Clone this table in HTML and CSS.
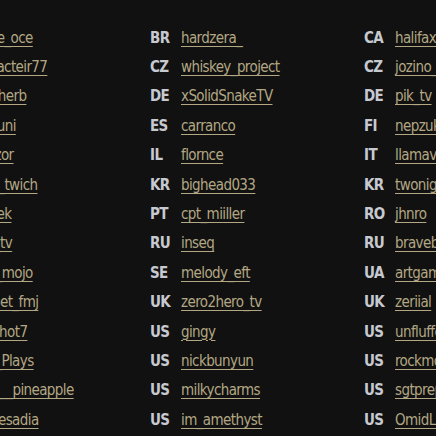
FILE: index.html
```html
<!DOCTYPE html>
<html>
<head>
<meta charset="utf-8">
<link rel="stylesheet" href="styles.css">
</head>
<body>
<div class="board">
  <ul class="col">
    <li class="row"><span class="cc">AU</span><a class="name" href="#">Hattie_oce</a></li>
    <li class="row"><span class="cc">BE</span><a class="name" href="#">Characteir77</a></li>
    <li class="row"><span class="cc">CA</span><a class="name" href="#">lazy_herb</a></li>
    <li class="row"><span class="cc">CA</span><a class="name" href="#">shyguni</a></li>
    <li class="row"><span class="cc">DE</span><a class="name" href="#">Bluezor</a></li>
    <li class="row"><span class="cc">DE</span><a class="name" href="#">Ianro_twich</a></li>
    <li class="row"><span class="cc">FR</span><a class="name" href="#">Koshek</a></li>
    <li class="row"><span class="cc">NL</span><a class="name" href="#">Tazo_tv</a></li>
    <li class="row"><span class="cc">PL</span><a class="name" href="#">Mike_mojo</a></li>
    <li class="row"><span class="cc">UK</span><a class="name" href="#">Helmet_fmj</a></li>
    <li class="row"><span class="cc">US</span><a class="name" href="#">Oneshot7</a></li>
    <li class="row"><span class="cc">US</span><a class="name" href="#">Nina_Plays</a></li>
    <li class="row"><span class="cc">US</span><a class="name" href="#">sour___pineapple</a></li>
    <li class="row"><span class="cc">US</span><a class="name" href="#">Quiikesadia</a></li>
  </ul>
  <ul class="col">
    <li class="row"><span class="cc">BR</span><a class="name" href="#">hardzera_</a></li>
    <li class="row"><span class="cc">CZ</span><a class="name" href="#">whiskey_project</a></li>
    <li class="row"><span class="cc">DE</span><a class="name" href="#">xSolidSnakeTV</a></li>
    <li class="row"><span class="cc">ES</span><a class="name" href="#">carranco</a></li>
    <li class="row"><span class="cc">IL</span><a class="name" href="#">florncе</a></li>
    <li class="row"><span class="cc">KR</span><a class="name" href="#">bighead033</a></li>
    <li class="row"><span class="cc">PT</span><a class="name" href="#">cpt_miiller</a></li>
    <li class="row"><span class="cc">RU</span><a class="name" href="#">inseq</a></li>
    <li class="row"><span class="cc">SE</span><a class="name" href="#">melody_eft</a></li>
    <li class="row"><span class="cc">UK</span><a class="name" href="#">zero2hero_tv</a></li>
    <li class="row"><span class="cc">US</span><a class="name" href="#">gingy</a></li>
    <li class="row"><span class="cc">US</span><a class="name" href="#">nickbunyun</a></li>
    <li class="row"><span class="cc">US</span><a class="name" href="#">milkycharms</a></li>
    <li class="row"><span class="cc">US</span><a class="name" href="#">im_amethyst</a></li>
  </ul>
  <ul class="col">
    <li class="row"><span class="cc">CA</span><a class="name" href="#">halifaxx</a></li>
    <li class="row"><span class="cc">CZ</span><a class="name" href="#">jozino_cz</a></li>
    <li class="row"><span class="cc">DE</span><a class="name" href="#">pik_tv</a></li>
    <li class="row"><span class="cc">FI</span><a class="name" href="#">nepzuk</a></li>
    <li class="row"><span class="cc">IT</span><a class="name" href="#">llamav3</a></li>
    <li class="row"><span class="cc">KR</span><a class="name" href="#">twonightss</a></li>
    <li class="row"><span class="cc">RO</span><a class="name" href="#">jhnro</a></li>
    <li class="row"><span class="cc">RU</span><a class="name" href="#">bravebonez</a></li>
    <li class="row"><span class="cc">UA</span><a class="name" href="#">artgamer</a></li>
    <li class="row"><span class="cc">UK</span><a class="name" href="#">zeriial</a></li>
    <li class="row"><span class="cc">US</span><a class="name" href="#">unfluffed</a></li>
    <li class="row"><span class="cc">US</span><a class="name" href="#">rockmoney</a></li>
    <li class="row"><span class="cc">US</span><a class="name" href="#">sgtprepper</a></li>
    <li class="row"><span class="cc">US</span><a class="name" href="#">OmidLive</a></li>
  </ul>
</div>
</body>
</html>
```

FILE: styles.css
```css
html, body {
  margin: 0;
  padding: 0;
  background: #111111;
  overflow: hidden;
}

.board {
  display: flex;
  margin-left: -64px;
  padding-top: 23px;
  width: 700px;
}

.col {
  list-style: none;
  margin: 0;
  padding: 0;
  width: 214px;
  flex: none;
}

.row {
  display: flex;
  align-items: center;
  height: 29.4px;
  white-space: nowrap;
}

.cc {
  width: 31px;
  flex: none;
  font-family: "DejaVu Sans Condensed", "DejaVu Sans", sans-serif;
  font-weight: bold;
  font-size: 15px;
  letter-spacing: -0.6px;
  color: #c6cad0;
}

.name {
  font-family: "DejaVu Sans Condensed", "DejaVu Sans", sans-serif;
  font-size: 15px;
  letter-spacing: -0.6px;
  color: #b3a784;
  text-decoration: underline;
  text-underline-offset: 3px;
  text-decoration-thickness: 1px;
}
```
